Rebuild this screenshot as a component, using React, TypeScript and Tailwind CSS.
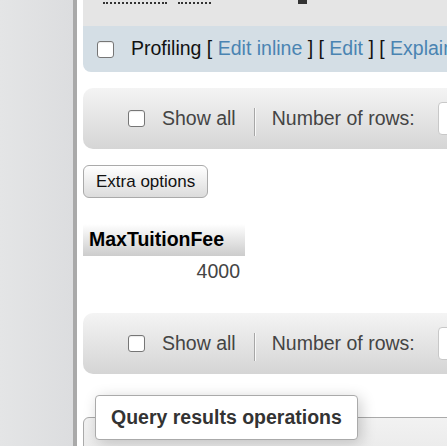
function Checkbox() {
  return (
    <span className="inline-block w-[17px] h-[17px] rounded-[3px] border border-[#767676] bg-white shadow-[inset_0_1px_1px_rgba(0,0,0,0.08)] shrink-0" />
  );
}

function NavBar() {
  return (
    <div className="h-[61px] w-[460px] rounded-l-[10px] bg-gradient-to-b from-[#f4f4f4] to-[#d5d5d5] flex items-center pl-[45px] text-[19.5px] text-[#444] whitespace-nowrap">
      <Checkbox />
      <span className="ml-[17px]">Show all</span>
      {/* separator */}
      <span className="ml-[18px] w-[2px] h-[28px] bg-[#a6a6a6] border-r border-[#f8f8f8] mt-[6px]" />
      <span className="ml-[16px]">Number of rows:</span>
      <span className="ml-[23px] w-[40px] h-[33px] bg-white border border-[#c8c8c8] rounded-l-[4px]" />
    </div>
  );
}

export default function App() {
  return (
    <div className="flex h-[446px] w-[447px] overflow-hidden bg-white font-['Liberation_Sans',Arial,sans-serif]">
      {/* navigation panel */}
      <div className="w-[73px] shrink-0 bg-gradient-to-r from-[#e4e5e6] to-[#dcdddf]" />
      <div className="w-[4px] shrink-0 bg-[#a9a9a9]" />

      <div className="w-[500px] shrink-0 pl-[6px]">
        {/* query box + profiling */}
        <div className="rounded-b-[8px] overflow-hidden">
          <div className="h-[26px] bg-[#e5e5e5] relative">
            <span className="absolute left-[20px] top-[2px] w-[64px] border-b-2 border-dotted border-[#333]" />
            <span className="absolute left-[95px] top-[2px] w-[33px] border-b-2 border-dotted border-[#333]" />
            <span className="absolute left-[215px] top-0 w-[9px] h-[4px] bg-[#333]" />
          </div>
          <div className="h-[46px] bg-[#d4dee5] flex items-center pl-[14px] text-[19.5px] text-[#111] whitespace-nowrap">
            <Checkbox />
            <span className="ml-[17px]">
              Profiling [ <span className="text-[#4a84b2]">Edit inline</span> ] [{" "}
              <span className="text-[#4a84b2]">Edit</span> ] [{" "}
              <span className="text-[#4a84b2]">Explain SQL</span> ]
            </span>
          </div>
        </div>

        <div className="mt-[16px]">
          <NavBar />
        </div>

        <button className="mt-[16px] h-[33px] px-[12px] rounded-[6px] border border-[#aaa] bg-gradient-to-b from-white to-[#dcdcdc] text-[17px] text-[#111]">
          Extra options
        </button>

        {/* result table */}
        <table className="mt-[26px] border-collapse">
          <thead>
            <tr>
              <th className="h-[32px] w-[162px] pl-[6px] text-left text-[19.5px] font-bold text-black bg-gradient-to-b from-white to-[#cccccc]">
                MaxTuitionFee
              </th>
            </tr>
          </thead>
          <tbody>
            <tr>
              <td className="h-[32px] pr-[5px] text-right text-[19.5px] text-[#444]">4000</td>
            </tr>
          </tbody>
        </table>

        <div className="mt-[25px]">
          <NavBar />
        </div>

        <fieldset className="mt-[21px] h-[80px] w-[460px] pl-[11px] border border-[#aaa] rounded-l-[6px] bg-gradient-to-b from-[#f2f2f2] to-[#e6e6e6]">
          <legend className="px-[15px] h-[45px] flex items-center bg-white border border-[#aaa] rounded-[4px] shadow-[3px_3px_15px_rgba(0,0,0,0.2)] text-[19.5px] font-bold text-[#333] whitespace-nowrap">
            Query results operations
          </legend>
        </fieldset>
      </div>
    </div>
  );
}
